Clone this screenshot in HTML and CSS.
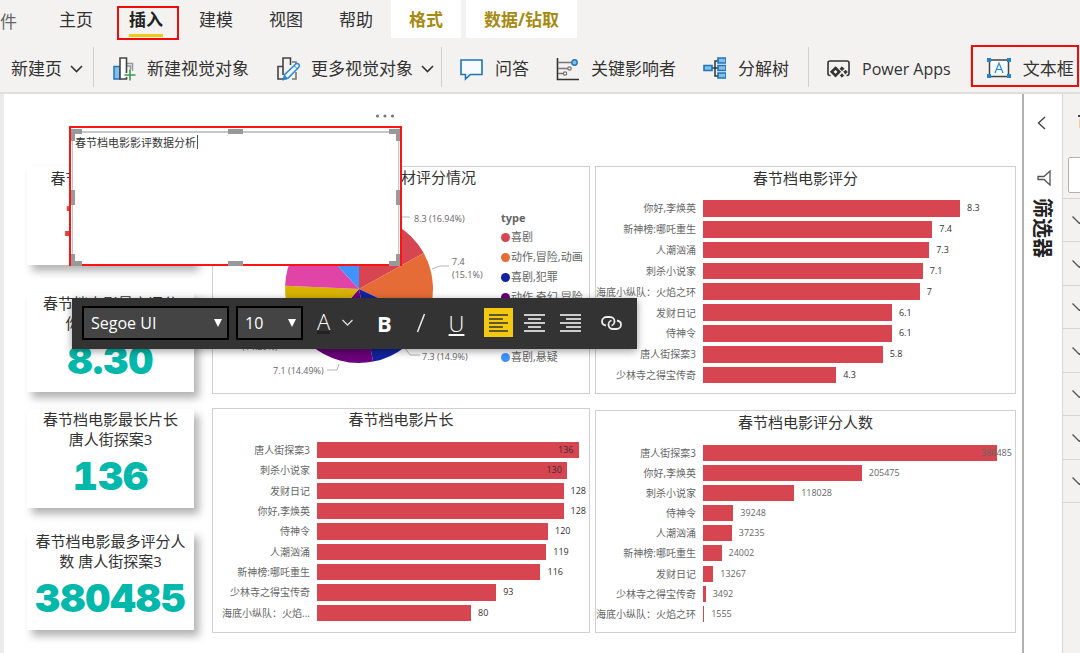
FILE: index.html
```html
<!DOCTYPE html>
<html lang="zh-CN">
<head>
<meta charset="utf-8">
<title>春节档电影影评数据分析</title>
<link rel="stylesheet" href="styles.css">
</head>
<body>
<header class="header">
  <nav class="tabs">
    <button class="tab tab-file">件</button>
    <button class="tab">主页</button>
    <button class="tab tab-active marked">插入</button>
    <button class="tab">建模</button>
    <button class="tab">视图</button>
    <button class="tab">帮助</button>
    <button class="tab tab-context">格式</button>
    <button class="tab tab-context">数据/钻取</button>
  </nav>
  <div class="ribbon">
    <div class="group group-page">
      <button class="command command-menu">新建页
        <svg width="13" height="8" viewBox="0 0 13 8" fill="none" stroke="#333" stroke-width="1.6"><path d="M1 1l5.500 5.500L12 1"/></svg>
      </button>
    </div>
    <div class="group">
      <button class="command command-near">
        <svg width="23" height="24" viewBox="0 0 23 24" fill="none"><path d="M1 9.500h6v12.500H1z" fill="#83bdec" stroke="#1f74b8" stroke-width="1.500"/><path d="M14 6.500h5.500V14M14 9h3.500v5" stroke="#999" stroke-width="1.500"/><path d="M7 1h6.500v21H7z" fill="#fff" stroke="#444" stroke-width="1.600"/><path d="M17 12.500v11M11.500 18h11" stroke="#f3f2f1" stroke-width="4"/><path d="M17 12.500v11M11.500 18h11" stroke="#3a9b50" stroke-width="1.600"/></svg>
        新建视觉对象</button>
      <button class="command command-near">
        <svg width="23" height="24" viewBox="0 0 23 24" fill="none"><path d="M6 22H1V9.500h5M6 18V1h7.500v7" stroke="#444" stroke-width="1.600"/><path d="M15 5h4v3M15 22h4v-7" stroke="#777" stroke-width="1.600"/><path d="M6.500 22.500l1.300-5L18.500 7.200q2-1.500 3.300 0 1.200 1.500-.3 3.200L11.200 21z" fill="#eef6fc" stroke="#2b88d8" stroke-width="1.500"/><path d="M6.500 22.500l1-4 3 3zM17 8.700l3.300 3" stroke="#2b88d8" fill="#2b88d8"/></svg>
        <span class="command-text">更多视觉对象
        <svg width="13" height="8" viewBox="0 0 13 8" fill="none" stroke="#333" stroke-width="1.6"><path d="M1 1l5.500 5.500L12 1"/></svg></span>
      </button>
    </div>
    <div class="group group-wide">
      <button class="command">
        <svg width="23" height="24" viewBox="0 0 23 24"><path d="M1 3h21v14.500H10.500L5.500 22v-4.500H1z" fill="#f8fbfe" stroke="#1f74b8" stroke-width="1.600"/></svg>
        问答</button>
      <button class="command">
        <svg width="23" height="24" viewBox="0 0 23 24" fill="none"><path d="M1.500 1v21.500H23" stroke="#333" stroke-width="1.600"/><path d="M2 5.500h14M2 11.500h10M2 16.500h5" stroke="#777" stroke-width="1.500"/><circle cx="18.500" cy="5.500" r="2.700" fill="#83bdec" stroke="#1f74b8" stroke-width="1.400"/><circle cx="13.500" cy="11.500" r="1.700" stroke="#777" stroke-width="1.300"/><circle cx="9" cy="16.500" r="1.700" stroke="#777" stroke-width="1.300"/></svg>
        关键影响者</button>
      <button class="command">
        <svg width="23" height="24" viewBox="0 0 23 24"><path d="M8 11h7M15 4h-3v15h3" fill="none" stroke="#333" stroke-width="1.500"/><g fill="#83bdec" stroke="#1f74b8" stroke-width="1.600"><path d="M1 8.500h8v5H1zM15 1h8v5h-8zM15 8.500h8v5h-8zM15 16h8v5h-8z"/></g></svg>
        分解树</button>
    </div>
    <div class="group group-wide">
      <button class="command command-latin">
        <svg width="23" height="24" viewBox="0 0 23 24" fill="none" stroke="#333"><path d="M3.500 18.500H3q-2 0-2-2V6q0-2 2-2h17q2 0 2 2v10.500q0 2-2 2h-.5" stroke-width="1.600"/><path d="M8.500 11l3.800 3.800-3.800 3.800-3.800-3.800z" stroke-width="2.600"/><path d="M15 9.800l1.900 1.900-1.900 1.900-1.900-1.900zM18.500 13.200l1.800 1.800-1.800 1.800-1.800-1.800zM15 16.800l1.700 1.700-1.700 1.700-1.700-1.700z" fill="#333"/></svg>
        Power Apps</button>
    </div>
    <div class="group group-text marked">
      <button class="command">
        <svg width="24" height="24" viewBox="0 0 24 24"><path d="M2.500 3h19v16.500h-19z" fill="#f8fbfe" stroke="#444" stroke-width="1.500"/><path d="M0 1h4v4H0zM20 1h4v4h-4zM0 17h4v4H0zM20 17h4v4h-4z" fill="#1f86d1"/><path d="M8 16l4-10 4 10M9.500 12.500h5" fill="none" stroke="#2b88d8" stroke-width="1.200"/></svg>
        文本框</button>
    </div>
  </div>
</header>

<main class="workspace">
  <section class="canvas">
    <div class="column column-cards">
      <article class="card">
        <h2 class="title">春节档最多的题材</h2>
        <p class="number number-genre">喜剧</p>
      </article>
      <article class="card">
        <h2 class="title">春节档电影最高评分<br>你好，李焕英</h2>
        <p class="number">8.30</p>
      </article>
      <article class="card">
        <h2 class="title">春节档电影最长片长<br>唐人街探案3</h2>
        <p class="number">136</p>
      </article>
      <article class="card">
        <h2 class="title">春节档电影最多评分人<br>数 唐人街探案3</h2>
        <p class="number">380485</p>
      </article>
    </div>

    <div class="column column-middle">
      <article class="chart">
        <h2 class="title">春节电影题材评分情况</h2>
        <div class="pie">
          <svg class="pie-plot" viewBox="0 0 288 206">
            <g transform="translate(146 102)">
              <path fill="#d64550" d="M0 0V-74A74 74 0 0 1 64.700-35.900z"/>
              <path fill="#e66c37" d="M0 0L64.700-35.900A74 74 0 0 1 66.900 31.600z"/>
              <path fill="#12239e" d="M0 0L66.900 31.600A74 74 0 0 1 14.100 72.600z"/>
              <path fill="#6b007b" d="M0 0L14.100 72.600A74 74 0 0 1-48.600 55.800z"/>
              <path fill="#d9b300" d="M0 0L-48.600 55.800A74 74 0 0 1-73.900-3.200z"/>
              <path fill="#e044a7" d="M0 0L-73.900-3.200A74 74 0 0 1-50.200-54.400z"/>
              <path fill="#4092ff" d="M0 0L-50.200-54.400A74 74 0 0 1 0-74z"/>
            </g>
            <path class="leader" d="M182 31l6-1h9M219 82l8-3h9M192 161l5 7h10M126 177l-2 6h-10"/>
            <g class="callout">
              <text x="201" y="35">8.3 (16.94%)</text>
              <text x="239" y="78">7.4</text>
              <text x="239" y="91">(15.1%)</text>
              <text x="209" y="173">7.3 (14.9%)</text>
              <text x="60" y="187">7.1 (14.49%)</text>
              <text x="29" y="163">(14.29%)</text>
            </g>
          </svg>
          <div class="legend">
            <h3 class="legend-title">type</h3>
            <ul class="legend-list">
              <li class="key key-red">喜剧</li>
              <li class="key key-orange">动作,冒险,动画</li>
              <li class="key key-navy">喜剧,犯罪</li>
              <li class="key key-purple">动作,奇幻,冒险</li>
              <li class="key key-gold"></li>
              <li class="key key-pink"></li>
              <li class="key key-blue">喜剧,悬疑</li>
            </ul>
          </div>
        </div>
      </article>

      <article class="chart">
        <h2 class="title">春节档电影片长</h2>
        <ul class="bars bars-length">
          <li class="row"><span class="label">唐人街探案3</span><span class="track"><span class="bar" style="width:100%"></span><span class="value value-inside">136</span></span></li>
          <li class="row"><span class="label">刺杀小说家</span><span class="track"><span class="bar" style="width:95.6%"></span><span class="value value-inside">130</span></span></li>
          <li class="row"><span class="label">发财日记</span><span class="track"><span class="bar" style="width:94.1%"></span><span class="value">128</span></span></li>
          <li class="row"><span class="label">你好,李焕英</span><span class="track"><span class="bar" style="width:94.1%"></span><span class="value">128</span></span></li>
          <li class="row"><span class="label">侍神令</span><span class="track"><span class="bar" style="width:88.2%"></span><span class="value">120</span></span></li>
          <li class="row"><span class="label">人潮汹涌</span><span class="track"><span class="bar" style="width:87.5%"></span><span class="value">119</span></span></li>
          <li class="row"><span class="label">新神榜:哪吒重生</span><span class="track"><span class="bar" style="width:85.3%"></span><span class="value">116</span></span></li>
          <li class="row"><span class="label">少林寺之得宝传奇</span><span class="track"><span class="bar" style="width:68.4%"></span><span class="value">93</span></span></li>
          <li class="row"><span class="label">海底小纵队：火焰...</span><span class="track"><span class="bar" style="width:58.8%"></span><span class="value">80</span></span></li>
        </ul>
      </article>
    </div>

    <div class="column column-right">
      <article class="chart chart-score">
        <h2 class="title">春节档电影评分</h2>
        <ul class="bars bars-score">
          <li class="row"><span class="label">你好,李焕英</span><span class="track"><span class="bar" style="width:100%"></span><span class="value">8.3</span></span></li>
          <li class="row"><span class="label">新神榜:哪吒重生</span><span class="track"><span class="bar" style="width:89.2%"></span><span class="value">7.4</span></span></li>
          <li class="row"><span class="label">人潮汹涌</span><span class="track"><span class="bar" style="width:88%"></span><span class="value">7.3</span></span></li>
          <li class="row"><span class="label">刺杀小说家</span><span class="track"><span class="bar" style="width:85.5%"></span><span class="value">7.1</span></span></li>
          <li class="row"><span class="label">海底小纵队：火焰之环</span><span class="track"><span class="bar" style="width:84.3%"></span><span class="value">7</span></span></li>
          <li class="row"><span class="label">发财日记</span><span class="track"><span class="bar" style="width:73.5%"></span><span class="value">6.1</span></span></li>
          <li class="row"><span class="label">侍神令</span><span class="track"><span class="bar" style="width:73.5%"></span><span class="value">6.1</span></span></li>
          <li class="row"><span class="label">唐人街探案3</span><span class="track"><span class="bar" style="width:69.9%"></span><span class="value">5.8</span></span></li>
          <li class="row"><span class="label">少林寺之得宝传奇</span><span class="track"><span class="bar" style="width:51.8%"></span><span class="value">4.3</span></span></li>
        </ul>
      </article>

      <article class="chart chart-count">
        <h2 class="title">春节档电影评分人数</h2>
        <ul class="bars bars-count">
          <li class="row"><span class="label">唐人街探案3</span><span class="track"><span class="bar" style="width:100%"></span><span class="value value-across">380485</span></span></li>
          <li class="row"><span class="label">你好,李焕英</span><span class="track"><span class="bar" style="width:54%"></span><span class="value">205475</span></span></li>
          <li class="row"><span class="label">刺杀小说家</span><span class="track"><span class="bar" style="width:31%"></span><span class="value">118028</span></span></li>
          <li class="row"><span class="label">侍神令</span><span class="track"><span class="bar" style="width:10.3%"></span><span class="value">39248</span></span></li>
          <li class="row"><span class="label">人潮汹涌</span><span class="track"><span class="bar" style="width:9.8%"></span><span class="value">37235</span></span></li>
          <li class="row"><span class="label">新神榜:哪吒重生</span><span class="track"><span class="bar" style="width:6.3%"></span><span class="value">24002</span></span></li>
          <li class="row"><span class="label">发财日记</span><span class="track"><span class="bar" style="width:3.5%"></span><span class="value">13267</span></span></li>
          <li class="row"><span class="label">少林寺之得宝传奇</span><span class="track"><span class="bar" style="width:0.9%"></span><span class="value">3492</span></span></li>
          <li class="row"><span class="label">海底小纵队：火焰之环</span><span class="track"><span class="bar" style="width:0.4%"></span><span class="value">1555</span></span></li>
        </ul>
      </article>
    </div>

    <button class="more" aria-label="更多选项"><svg width="20" height="4" viewBox="0 0 20 4" fill="#777"><circle cx="2.500" cy="2" r="1.600"/><circle cx="10" cy="2" r="1.600"/><circle cx="17.500" cy="2" r="1.600"/></svg></button>

    <div class="textbox">
      <textarea class="textbox-input" aria-label="文本框" spellcheck="false">春节档电影影评数据分析</textarea>
      <span class="caret"></span>
      <span class="handle corner top left"></span>
      <span class="handle corner top right"></span>
      <span class="handle corner bottom left"></span>
      <span class="handle corner bottom right"></span>
      <span class="handle edge-x top"></span>
      <span class="handle edge-x bottom"></span>
      <span class="handle edge-y left"></span>
      <span class="handle edge-y right"></span>
    </div>

    <div class="toolbar">
      <span class="picker picker-font">
        <select class="select" aria-label="字体"><option>Segoe UI</option></select>
        <svg class="picker-arrow" width="8" height="8" viewBox="0 0 8 8" fill="#fff"><path d="M0 0h8L4 8z"/></svg>
      </span>
      <span class="picker picker-size">
        <select class="select" aria-label="字号"><option>10</option></select>
        <svg class="picker-arrow" width="8" height="8" viewBox="0 0 8 8" fill="#fff"><path d="M0 0h8L4 8z"/></svg>
      </span>
      <button class="tool tool-color" aria-label="字体颜色"><span class="glyph-a">A</span><svg width="11" height="7" viewBox="0 0 11 7" fill="none" stroke="#ddd" stroke-width="1.300"><path d="M.5 1l5 5 5-5"/></svg></button>
      <button class="tool tool-bold">B</button>
      <button class="tool" aria-label="斜体"><svg width="10" height="20" viewBox="0 0 10 20" stroke="#eee" stroke-width="1.500"><path d="M1.500 19L8.500 1"/></svg></button>
      <button class="tool tool-underline">U</button>
      <div class="tool-set">
        <button class="tool tool-on" aria-label="左对齐"><svg width="21" height="18" viewBox="0 0 21 18" stroke="#333" stroke-width="1.600"><path d="M1 1h19M1 5h14M1 9h19M1 13h14M1 17h19"/></svg></button>
        <button class="tool" aria-label="居中"><svg width="21" height="18" viewBox="0 0 21 18" stroke="#fff" stroke-width="1.600"><path d="M0 1h21M4 5h13M0 9h21M4 13h13M0 17h21"/></svg></button>
        <button class="tool" aria-label="右对齐"><svg width="21" height="18" viewBox="0 0 21 18" stroke="#fff" stroke-width="1.600"><path d="M0 1h21M6 5h15M0 9h21M6 13h15M0 17h21"/></svg></button>
      </div>
      <button class="tool tool-link" aria-label="链接"><svg width="21" height="14" viewBox="0 0 21 14" fill="none" stroke="#eee" stroke-width="1.800"><path d="M5 9.500C2.500 9 1 7.500 1 5.500 1 3 3 1 5.500 1h3.500c2.500 0 4.500 2 4.500 4.200S12 9.300 10.500 9.300"/><path d="M16 4.500c2.500.5 4 2 4 4 0 2.500-2 4.500-4.500 4.500H12c-2.500 0-4.500-2-4.500-4.200S9 4.700 10.500 4.700"/></svg></button>
    </div>
  </section>

  <aside class="filters">
    <button class="filters-toggle" aria-label="展开"><svg width="9" height="14" viewBox="0 0 9 14" fill="none" stroke="#444" stroke-width="1.400"><path d="M8 1L1.500 7 8 13"/></svg></button>
    <svg class="funnel" width="14" height="16" viewBox="0 0 14 16" fill="none" stroke="#555" stroke-width="1.300"><path d="M13 1v14L7 9.500H1v-3h6z"/></svg>
    <h2 class="filters-title">筛选器</h2>
  </aside>

  <aside class="pane">
    <svg class="pane-mark" width="10" height="16" viewBox="0 0 10 16"><path d="M3 1h7v2H3z" fill="#444"/><path d="M4 5h6v9H4z" fill="#f0cf96"/></svg>
    <input class="pane-search" type="text" aria-label="搜索">
    <ul class="pane-list">
      <li class="pane-row"><svg width="15" height="8" viewBox="0 0 15 8"><path d="M.5.5l7 7 7-7"/></svg></li>
      <li class="pane-row"><svg width="15" height="8" viewBox="0 0 15 8"><path d="M.5.5l7 7 7-7"/></svg></li>
      <li class="pane-row"><svg width="15" height="8" viewBox="0 0 15 8"><path d="M.5.5l7 7 7-7"/></svg></li>
      <li class="pane-row"><svg width="15" height="8" viewBox="0 0 15 8"><path d="M.5.5l7 7 7-7"/></svg></li>
      <li class="pane-row"><svg width="15" height="8" viewBox="0 0 15 8"><path d="M.5.5l7 7 7-7"/></svg></li>
      <li class="pane-row"><svg width="15" height="8" viewBox="0 0 15 8"><path d="M.5.5l7 7 7-7"/></svg></li>
      <li class="pane-row"><svg width="15" height="8" viewBox="0 0 15 8"><path d="M.5.5l7 7 7-7"/></svg></li>
    </ul>
  </aside>
</main>
</body>
</html>
```

FILE: styles.css
```css
* { box-sizing: border-box; }

body {
  margin: 0;
  min-height: 100vh;
  display: flex;
  flex-direction: column;
  overflow: hidden;
  background: #fff;
  color: #333;
  font-family: "Open Sans", "Noto Sans CJK SC", sans-serif;
}

button, input, select, textarea { font: inherit; color: inherit; }
button { border: 0; padding: 0; background: none; white-space: nowrap; }
ul, h2, h3, p { margin: 0; padding: 0; list-style: none; font-weight: 400; }
svg { flex: none; display: block; }

/* Header */
.header {
  background: #f3f2f1;
  border-bottom: 2px solid #e1dfdd;
  overflow: hidden;
}
.tabs { display: flex; height: 40px; }
.tab {
  position: relative;
  height: 38px;
  padding: 2px 18px 0;
  font-size: 17px;
  line-height: 36px;
}
.tab-file { margin-right: 24px; padding: 6px 0 0; line-height: 32px; color: #666; }
.tab-active { font-weight: 700; color: #222; }
.tab-active::after {
  content: "";
  position: absolute;
  left: 18px;
  right: 18px;
  bottom: 1px;
  height: 3px;
  background: #f2c811;
}
.marked { position: relative; }
.marked::before {
  content: "";
  position: absolute;
  inset: 6px 2px -2px 6px;
  border: 2px solid #f00c0c;
}
.tab-context { background: #fff; color: #a68a12; font-weight: 700; }
.tab-context + .tab-context { margin-left: 5px; }

.ribbon { display: flex; height: 52px; padding: 7px 0 5px; }
.group {
  display: flex;
  align-items: center;
  gap: 28px;
  padding: 3px 7px 0 19px;
  border-right: 1px solid #d2d0ce;
}
.group-page { padding-left: 11px; padding-right: 10px; }
.group-wide { gap: 27px; padding-left: 18px; padding-right: 19px; }
.group-text { padding-left: 16px; padding-right: 5px; border: 0; }
.group-text::before { inset: -2px 0 0; }
.command, .command-text {
  display: flex;
  align-items: center;
  gap: 12px;
  font-size: 17px;
  line-height: 24px;
}
.command-near { gap: 11px; }
.command-menu, .command-text { gap: 8px; }
.command-latin { font-size: 16px; }

/* Workspace */
.workspace { flex: 1; display: flex; }
.canvas {
  position: relative;
  flex: 1;
  min-width: 0;
  display: grid;
  grid-template-columns: 167px minmax(0, 391fr) minmax(0, 421fr);
  column-gap: 5px;
  padding: 72px 6px 20px 23px;
  border-left: 4px solid #edebe9;
  border-right: 2px solid #b3b0ad;
}
.column { display: flex; flex-direction: column; }
.column-middle { gap: 14px; padding-left: 13px; }
.column-right { gap: 16px; }

.title { font-size: 15px; line-height: 20px; text-align: center; }

.card {
  height: 99px;
  background: #fff;
  box-shadow: 5px 6px 8px rgba(0, 0, 0, .3);
}
.card:nth-child(1) { margin-bottom: 28px; padding-top: 2px; }
.card:nth-child(2) { margin-bottom: 17px; }
.card:nth-child(3) { margin-bottom: 23px; }
.number {
  font-family: Inter, "Open Sans", sans-serif;
  font-size: 39px;
  font-weight: 900;
  font-variant-numeric: tabular-nums;
  line-height: 54px;
  text-align: center;
  color: #01b8aa;
}
.number-genre {
  font-family: "Noto Sans CJK SC", sans-serif;
  font-size: 47px;
  line-height: 72px;
  color: #d64550;
}

.chart {
  flex: 1;
  display: flex;
  flex-direction: column;
  border: 1px solid #d0d0d0;
}
.chart-score { flex: 228 1 0; }
.chart-count { flex: 222 1 0; }
.column-right .title { line-height: 22px; }

.bars {
  flex: 1;
  display: flex;
  flex-direction: column;
  padding: 11px 0 9px;
}
.bars-length { padding-right: 10px; }
.bars-score { padding: 9px 55px 8px 0; }
.bars-count { padding: 9px 18px 8px 0; }
.row { flex: 1; display: flex; align-items: center; gap: 7px; }
.label {
  width: 100px;
  font-size: 10px;
  line-height: 16px;
  text-align: right;
  white-space: nowrap;
  color: #666;
}
.bars-length .label { width: 97px; }
.track { flex: 1; display: flex; align-items: center; height: 80%; min-width: 0; }
.bar { flex: none; height: 100%; background: #d64550; }
.value { width: 0; margin-left: 7px; font-size: 9px; line-height: 16px; color: #333; }
.value-inside { margin-left: -21px; }
.value-across { margin-left: -16px; }
.bars-count .value { color: #666; }

.pie { flex: 1; display: flex; }
.pie-plot { flex: 1 1 288px; min-width: 0; align-self: flex-start; }
.leader { fill: none; stroke: #b5b5b5; }
.callout { font-size: 9px; fill: #666; }
.legend { flex: 0 0 88px; padding-top: 22px; color: #666; }
.legend-title { font-size: 11px; font-weight: 700; line-height: 18px; }
.legend-list { font-size: 11px; line-height: 20px; }
.key { display: flex; align-items: center; gap: 1px; height: 20px; white-space: nowrap; }
.key::before {
  content: "";
  flex: none;
  width: 9px;
  height: 9px;
  border-radius: 50%;
  background: currentColor;
}
.key-red::before { background: #d64550; }
.key-orange::before { background: #e66c37; }
.key-navy::before { background: #12239e; }
.key-purple::before { background: #6b007b; }
.key-gold::before { background: #d9b300; }
.key-pink::before { background: #e044a7; }
.key-blue::before { background: #4092ff; }

/* Floating text box on the report canvas */
.more { position: absolute; left: 371px; top: 20px; }
.textbox {
  position: absolute;
  left: 65px;
  top: 32px;
  width: 333px;
  height: 140px;
  padding: 3px 1px 0;
  border: 2px solid #fb1414;
  background: #fff;
}
.textbox-input {
  display: block;
  width: 100%;
  height: 100%;
  padding: 1px 2px;
  border: 1px solid #c8c8c8;
  border-top-width: 2px;
  border-bottom: 0;
  outline: 0;
  resize: none;
  overflow: hidden;
  font-size: 11px;
  line-height: 18px;
}
.caret { position: absolute; left: 126px; top: 7px; width: 1px; height: 14px; background: #555; }
.handle { position: absolute; border: 0 solid #999; }
.corner { width: 11px; height: 12px; }
.top { top: 1px; border-top-width: 5px; }
.bottom { bottom: -2px; border-bottom-width: 5px; }
.left { left: 0; border-left-width: 4px; }
.right { right: 0; border-right-width: 4px; }
.edge-x { left: 157px; width: 15px; height: 5px; }
.edge-y { top: 62px; width: 4px; height: 15px; }

.toolbar {
  position: absolute;
  left: 68px;
  top: 204px;
  display: flex;
  align-items: center;
  gap: 7px;
  height: 51px;
  padding: 0 11px 2px 10px;
  background: #333;
  color: #fff;
  box-shadow: 0 2px 8px rgba(0, 0, 0, .4);
}
.picker { position: relative; height: 34px; }
.picker-font { width: 147px; }
.picker-size { width: 67px; }
.select {
  width: 100%;
  height: 100%;
  padding: 0 7px;
  appearance: none;
  border: 2px solid #000;
  border-radius: 0;
  background: #444;
  font-size: 16px;
}
.picker-arrow { position: absolute; right: 7px; top: 13px; }
.tool {
  display: flex;
  align-items: center;
  justify-content: center;
  width: 29px;
  height: 29px;
  font-size: 22px;
  line-height: 28px;
}
.tool-color { width: 44px; margin: 0 6px 0 3px; gap: 12px; }
.glyph-a { font-weight: 300; line-height: 20px; border-bottom: 3px solid #222; }
.tool-bold { font-weight: 700; }
.tool-underline { font-weight: 300; text-decoration: underline; }
.tool-set { display: flex; gap: 7px; margin-left: 6px; }
.tool-on { background: #f2c811; }
.tool-link { margin-left: 5px; }

/* Side panes */
.filters {
  width: 38px;
  display: flex;
  flex-direction: column;
  align-items: center;
  padding: 22px 3px 0 0;
}
.funnel { margin: 40px 0 12px 5px; }
.filters-title {
  font-size: 20px;
  font-weight: 700;
  line-height: 24px;
  writing-mode: vertical-rl;
  text-orientation: sideways;
  color: #222;
}
.pane {
  width: 18px;
  padding-top: 20px;
  border-left: 1px solid #d8d6d4;
  background: #f3f2f1;
  overflow: hidden;
}
.pane-mark { margin-left: 12px; }
.pane-search {
  display: block;
  width: 200px;
  height: 36px;
  margin: 27px 0 5px 5px;
  border: 1px solid #b3b0ad;
  border-radius: 2px;
  background: #fff;
}
.pane-list { border-top: 1px solid #d8d6d4; }
.pane-row {
  display: flex;
  align-items: center;
  height: 43px;
  padding-left: 9px;
  border-bottom: 1px solid #d8d6d4;
}
.pane-row:nth-child(even) { height: 44px; }
.pane-row svg { fill: none; stroke: #555; stroke-width: 1.4; }
```
